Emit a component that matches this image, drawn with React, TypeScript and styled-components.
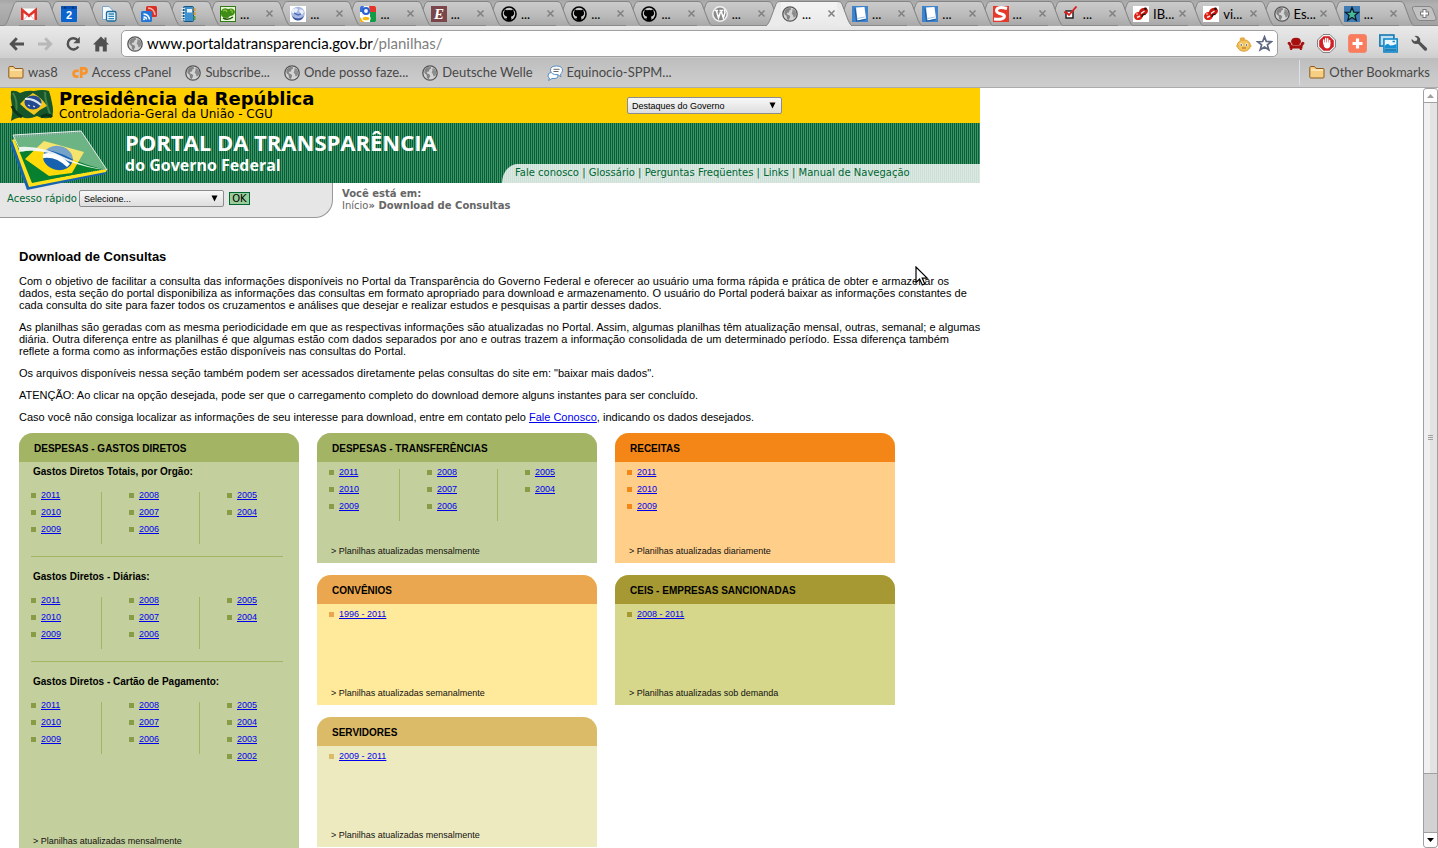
import React from "react";
import styled, { createGlobalStyle, css } from "styled-components";

const sans = `"Liberation Sans", Arial, sans-serif`;
const verdana = `"DejaVu Sans", Verdana, sans-serif`;
const ui = `Lato, "Open Sans", sans-serif`;
const display = `"Open Sans", "Noto Sans", sans-serif`;

const GlobalStyle = createGlobalStyle`
  * { box-sizing: border-box; }
  body { margin: 0; background: #fff; color: #000; font-family: ${sans}; }
  button { font: inherit; color: inherit; background: none; border: 0; padding: 0; }
  svg { display: block; flex: none; }
`;

const Window = styled.div`
  display: flex;
  flex-direction: column;
  height: 100vh;
  overflow: hidden;
`;

/* ---------- tab strip ---------- */

const TabStrip = styled.div`
  display: flex;
  height: 26px;
  padding-left: 5px;
  background: linear-gradient(#a6a6a6, #b2b2b2 20%, #a2a2a2);
  border-bottom: 1px solid #8a8a8a;
  font: 13px/24px ${ui};
`;

const TabBody = styled.div<{ $active?: boolean; $pinned?: boolean }>`
  display: flex;
  align-items: center;
  position: relative;
  min-width: 0;
  flex: ${(p) => (p.$pinned ? "0 0 26px" : "1 1 0")};
  padding-left: ${(p) => (p.$pinned ? 2 : 1)}px;
  margin-top: 1px;
  border-top: 1px solid #858585;
  background: linear-gradient(#cbcbcb, #bababa 60%, #a8a8a8);
  ${(p) =>
    p.$active &&
    css`
      background: linear-gradient(#f4f4f4, #e9e9e9);
      margin-bottom: -1px;
      padding-bottom: 1px;
    `}
`;

const TabLink = styled.button`
  display: flex;
  align-items: center;
  gap: 4px;
  flex: 1;
  min-width: 0;
  white-space: nowrap;
  color: #000;
`;

const CloseButton = styled.button`
  display: flex;
  width: 9px;
  margin-right: 1px;
`;

const NewTabButton = styled.button`
  display: flex;
  align-items: center;
  margin: 3px 1px 0 -2px;
`;

function TabEdge({ kind }: { kind: "first" | "between" | "last" | "intoActive" | "fromActive" }) {
  const id = `edge-${kind}`;
  const leftFill = kind === "fromActive" ? "#ebebeb" : `url(#${id})`;
  const rightFill = kind === "intoActive" ? "#ebebeb" : `url(#${id})`;
  const rightShape = "M14 1.5C11 1.5 10 2 9 4L3 20Q1 25 -1 26L14 26Z";
  const leftShape = "M0 1.5C3 1.5 4 2 5 4L11 20Q13 25 15 26L0 26Z";
  const rightLine = "M14 1.5C11 1.5 10 2 9 4L3 20Q1 25 -1 25.5";
  const leftLine = "M0 1.5C3 1.5 4 2 5 4L11 20Q13 25 15 25.5";
  const right = kind !== "last" && (
    <g>
      <path d={rightShape} fill={rightFill} />
      <path d={rightLine} fill="none" stroke="#858585" />
    </g>
  );
  const left = kind !== "first" && (
    <g>
      <path d={leftShape} fill={leftFill} />
      <path d={leftLine} fill="none" stroke="#808080" />
    </g>
  );
  return (
    <svg width="14" height="26" aria-hidden="true">
      <defs>
        <linearGradient id={id} x1="0" y1="0" x2="0" y2="1">
          <stop offset="0" stopColor="#cbcbcb" />
          <stop offset=".6" stopColor="#bababa" />
          <stop offset="1" stopColor="#a8a8a8" />
        </linearGradient>
      </defs>
      {kind === "intoActive" ? <>{left}{right}</> : <>{right}{left}</>}
    </svg>
  );
}

/* ---------- icons ---------- */

const Globe = () => (
  <svg width="16" height="16" viewBox="0 0 16 16">
    <circle cx="8" cy="8" r="7.2" fill="#d4d4d4" stroke="#555" strokeWidth="1.3" />
    <path d="M2.5 4.5L5 2.2L8.6 2L9.2 3.4L7.4 4.6L7 6.4L5 6.8L4.8 8.2L7.6 9.4L8.2 11L6.6 14.2L5 13L4.6 10L2.4 8Z" fill="#858585" />
    <path d="M10.5 3L13 4.2L14.4 7L13.6 10.6L11.6 11.4L10.8 9L9.6 7.4L10.4 5.4Z" fill="#8d8d8d" />
  </svg>
);
const Gmail = () => (
  <svg width="16" height="16" viewBox="0 0 16 16">
    <rect x="0" y="2.5" width="16" height="11.5" fill="#fff" />
    <path d="M1.3 14V4L8 9.8L14.7 4V14" fill="none" stroke="#e0342b" strokeWidth="2.6" />
    <path d="M3 13.5L6.4 9.6M13 13.5L9.6 9.6" stroke="#ddb6b3" />
  </svg>
);
const CalendarIcon = () => (
  <svg width="16" height="16" viewBox="0 0 16 16">
    <rect y="0" width="16" height="16" rx="1" fill="#0b63ce" />
    <path d="M0 1Q0 0 1 0H15Q16 0 16 1V3H0Z" fill="#0a4fae" />
    <circle cx="4" cy="1.800" r="1" fill="#05306e" /><circle cx="12" cy="1.800" r="1" fill="#05306e" />
    <text x="8" y="12.500" textAnchor="middle" fontFamily="Liberation Sans" fontWeight="bold" fontSize="11" fill="#fff">2</text>
  </svg>
);
const DocsIcon = () => (
  <svg width="16" height="16" viewBox="0 0 16 16">
    <path d="M1.500 .500H8L11.500 4V13.500H1.500Z" fill="#f4f9fd" stroke="#7ba4c8" />
    <rect x="5.500" y="5.500" width="9.500" height="9.500" rx="1.500" fill="#eaf5fb" stroke="#1d6a99" strokeWidth="1.300" />
    <path d="M7.500 8H13M7.500 10.300H13M7.500 12.600H13" stroke="#2f87b8" strokeWidth="1.300" />
  </svg>
);
const FeedIcon = () => (
  <svg width="16" height="16" viewBox="0 0 16 16">
    <rect x="5" y="0" width="11" height="11" rx="1.500" fill="#d93025" />
    <path d="M7 2Q13 2 14 9" stroke="#f6b0a8" strokeWidth="1.600" fill="none" />
    <rect x="0" y="5" width="11" height="11" rx="1.500" fill="#2377d8" />
    <path d="M2.500 8Q8 8.500 8.500 13.500M2.500 11Q5.500 11 5.500 13.500" stroke="#fff" strokeWidth="1.500" fill="none" />
    <circle cx="3" cy="13.300" r="1" fill="#fff" />
  </svg>
);
const NotebookIcon = () => (
  <svg width="16" height="16" viewBox="0 0 16 16">
    <rect x="2.500" y=".5" width="10" height="15" rx="1" fill="#3f92cf" stroke="#1c5479" />
    <rect x="6" y="3" width="5" height="3.500" fill="#e9f4fb" />
    <path d="M13.500 2V5M13.500 6V9" stroke="#d99b2e" strokeWidth="2" />
    <path d="M13.500 10V14" stroke="#4e9e48" strokeWidth="2" />
    <path d="M0 2.500H4M0 5.500H4M0 8.500H4M0 11.500H4M0 13.800H4" stroke="#dce6ec" />
  </svg>
);
const LeafIcon = () => (
  <svg width="16" height="16" viewBox="0 0 16 16">
    <rect x=".5" y=".5" width="15" height="15" fill="#eef4da" stroke="#2e7d17" />
    <path d="M1 5Q3 1 8 3Q14 1 15 6Q14 10 10 10L8 12Q1 12 1 8Z" fill="#3f8d17" />
    <path d="M3 5Q6 3 7 6M10 4Q13 4 12 7" stroke="#86c03a" fill="none" strokeWidth="1.300" />
    <path d="M3 12Q8 15 13 11" stroke="#1f5a0c" fill="none" strokeWidth="1.600" />
  </svg>
);
const BlueGlobeIcon = () => (
  <svg width="16" height="16" viewBox="0 0 16 16">
    <rect width="16" height="16" fill="#fff" />
    <circle cx="8" cy="7.500" r="6.800" fill="#a9b9e2" />
    <path d="M2 4Q5 1 8 3L7 6L4 8L2 7ZM9 4Q12 2 14 6L12 9L10 7Z" fill="#e9eefb" />
    <path d="M2 10Q8 15 14 10Q12 14.500 8 14.500Q4 14.500 2 10Z" fill="#38519e" />
    <path d="M4 7L8 9L11 8" stroke="#5470b9" fill="none" strokeWidth="1.500" />
  </svg>
);
const GoogleIcon = () => (
  <svg width="16" height="16" viewBox="0 0 16 16">
    <rect width="16" height="16" rx="1.500" fill="#fff" />
    <path d="M9 0H14.500Q16 0 16 1.500V6H10Z" fill="#e5352b" />
    <path d="M10 6H16V14.500Q16 16 14.500 16H10Z" fill="#139b48" />
    <path d="M0 6V1.500Q0 0 1.500 0H4L2 6Z" fill="#3870d8" />
    <path d="M0 11V14.500Q0 16 1.500 16H4Z" fill="#f6b60c" />
    <circle cx="6" cy="5" r="3" fill="#fff" stroke="#2b62cf" strokeWidth="2.200" />
    <ellipse cx="6" cy="12.500" rx="4" ry="2.500" fill="#f9bb12" stroke="#fff" strokeWidth="1.300" />
  </svg>
);
const EIcon = () => (
  <svg width="16" height="16" viewBox="0 0 16 16">
    <rect width="16" height="16" fill="#7a4649" />
    <text x="8" y="13" textAnchor="middle" fontFamily="Liberation Serif" fontStyle="italic" fontWeight="bold" fontSize="15" fill="#fff">E</text>
  </svg>
);
const GithubIcon = () => (
  <svg width="16" height="16" viewBox="0 0 16 16">
    <circle cx="8" cy="8" r="7" fill="#c9c9c9" stroke="#000" strokeWidth="1.600" />
    <path d="M3.600 3.200L5.800 4.200Q8 3.600 10.200 4.200L12.400 3.200L12.600 5.600Q13.600 7 12.800 8.800Q12 10.400 9.800 10.700L10.400 12V15.300H5.600V13.400L3.800 12.500L5.800 12.200L6.200 10.700Q4 10.400 3.200 8.800Q2.400 7 3.400 5.600Z" fill="#000" />
  </svg>
);
const WordpressIcon = () => (
  <svg width="16" height="16" viewBox="0 0 16 16">
    <circle cx="8" cy="8" r="7.200" fill="#8a8a8a" stroke="#f1f1f1" strokeWidth="1.500" />
    <path d="M3 4.500H6M7.500 4.500H11M4.300 4.500L6.500 12L8.500 6M9 4.500L11.300 12L13 6.500Q13 4.500 11.800 3.500" fill="none" stroke="#fff" strokeWidth="1.500" />
  </svg>
);
const BlueBookIcon = () => (
  <svg width="16" height="16" viewBox="0 0 16 16">
    <rect width="16" height="16" fill="#3f84cb" />
    <path d="M4 1.500L12.500 1L14 12.500L5.500 14.500Z" fill="#fff" />
    <path d="M5.500 12.500L12.800 11" stroke="#a5c3df" /><path d="M3 2.500L4.500 15.200L13.500 13.600" stroke="#1c5a9c" fill="none" />
  </svg>
);
const SIcon = () => (
  <svg width="16" height="16" viewBox="0 0 16 16">
    <rect width="16" height="16" fill="#e33a2c" />
    <path d="M14 2.500Q4 0 3.500 4.500Q3.500 7 8.500 8Q12.500 9 11 11.500Q9 14 1 13" stroke="#fff" strokeWidth="3" fill="none" />
  </svg>
);
const CheckIcon = () => (
  <svg width="16" height="16" viewBox="0 0 16 16">
    <rect x="3" y="5" width="7" height="7" fill="#fff" stroke="#222" strokeWidth="1.500" />
    <path d="M1 6.500L3 6L6 9L13.500 .500" stroke="#e01b1b" strokeWidth="1.800" fill="none" />
  </svg>
);
const KnotIcon = () => (
  <svg width="16" height="16" viewBox="0 0 16 16">
    <rect width="16" height="16" fill="#fff" />
    <ellipse cx="5.500" cy="10" rx="4.500" ry="4" fill="#dd2014" transform="rotate(-25 5.500 10)" />
    <ellipse cx="10.500" cy="5.500" rx="4.600" ry="3.600" fill="#c4170f" transform="rotate(-25 10.500 5.500)" />
    <path d="M8 7.500L11.500 5" stroke="#fff" strokeWidth="1.300" />
    <path d="M4 11.500L7 10" stroke="#fbe3e0" strokeWidth="1.500" />
    <path d="M9 11Q9 8 12.500 8.500" stroke="#2c0a08" fill="none" strokeWidth="1.300" />
    <circle cx="4" cy="8" r="1" fill="#ff9489" />
    <circle cx="12.500" cy="2.800" r="1.300" fill="#2c0a08" />
  </svg>
);
const StarTabIcon = () => (
  <svg width="16" height="16" viewBox="0 0 16 16">
    <rect width="16" height="16" fill="#3f7cb4" />
    <path d="M8 1.500L9.800 6.100L14.700 6.300L10.900 9.400L12.200 14.200L8 11.500L3.800 14.200L5.100 9.400L1.300 6.300L6.200 6.100Z" fill="#46b897" stroke="#0b1d2c" strokeWidth="1.300" />
  </svg>
);
const CloseIcon = () => (
  <svg width="9" height="9" viewBox="0 0 9 9">
    <path d="M1.500 1.500L7.500 7.500M7.500 1.500L1.500 7.500" stroke="#808080" strokeWidth="1.500" />
  </svg>
);
const NewTabIcon = () => (
  <svg width="26" height="16" viewBox="0 0 26 16">
    <path d="M1.500 3Q.5.500 3.500.500H18Q20.500.500 21.500 3L25 12Q25.500 14.500 23 14.500H9Q6.500 14.500 5.500 12Z" fill="#c2c2c2" stroke="#868686" />
    <path d="M13.500 3V12M9 7.500H18" stroke="#777" strokeWidth="4" />
    <path d="M13.500 4V11M10 7.500H17" stroke="#fff" strokeWidth="2" />
  </svg>
);
const ArrowIcon = ({ flip, color }: { flip?: boolean; color: string }) => (
  <svg width="16" height="14" viewBox="0 0 16 14">
    <g transform={flip ? "matrix(-1 0 0 1 16 0)" : undefined} fill="none" stroke={color} strokeWidth="2.800">
      <path d="M7.800 1.200L2.200 7L7.800 12.800M2.500 7H15" />
    </g>
  </svg>
);
const ReloadIcon = () => (
  <svg width="16" height="16" viewBox="0 0 16 16">
    <path d="M12.700 4.200A5.600 5.600 0 1 0 13.300 10.500" fill="none" stroke="#505050" strokeWidth="2.500" />
    <path d="M14.800.800V7.200H8.400Z" fill="#505050" />
  </svg>
);
const HomeIcon = () => (
  <svg width="16" height="16" viewBox="0 0 16 16">
    <path d="M8 .500L11.500 4V1.500H13.500V6L16 8.600H13.800V15.500H9.800V10.500H6.300V15.500H2.300V8.600H0Z" fill="#505050" />
  </svg>
);
const FaceIcon = () => (
  <svg width="16" height="16" viewBox="0 0 16 16">
    <ellipse cx="7.800" cy="9.500" rx="6.500" ry="5.700" fill="#f3c35c" stroke="#d79c33" />
    <path d="M4 4Q3 1 6 1.500Q8 .500 9 2.500L8 5Z" fill="#e6ac43" />
    <circle cx="1.500" cy="10" r="1.300" fill="#e8b14a" /><circle cx="14.300" cy="10" r="1.300" fill="#e8b14a" />
    <circle cx="5.200" cy="8.800" r="1.500" fill="#fff" /><circle cx="10.500" cy="8.800" r="1.500" fill="#fff" />
    <circle cx="5.200" cy="9" r=".800" fill="#333" /><circle cx="10.500" cy="9" r=".800" fill="#333" />
    <path d="M6 12H10" stroke="#a86c18" />
  </svg>
);
const StarIcon = () => (
  <svg width="17" height="17" viewBox="0 0 17 17">
    <path d="M8.500 1.800L10.300 6.500L15.400 6.700L11.400 9.900L12.800 14.800L8.500 12L4.200 14.800L5.600 9.900L1.600 6.700L6.700 6.500Z" fill="#fff" stroke="#5e6880" strokeWidth="1.700" />
  </svg>
);
const SofaIcon = () => (
  <svg width="18" height="14" viewBox="0 0 18 14">
    <path d="M4 5Q4 .700 9 .700Q14 .700 14 5L12.500 8H5.500Z" fill="#a50f0f" />
    <path d="M.500 6.500Q.500 4.800 2.400 4.800Q4.200 5 4.500 8H13.500Q13.800 5 15.600 4.800Q17.500 4.800 17.500 6.500L15.500 9V11.500H14.500L15 13H13L12.500 11.500H5.500L5 13H3L3.500 11.500H2.500V9Z" fill="#a50f0f" />
    <path d="M4.500 5.500L5.500 8.500H12.500L13.500 5.500" fill="none" stroke="#d07a7a" strokeWidth=".600" />
  </svg>
);
const StopHandIcon = () => (
  <svg width="19" height="19" viewBox="0 0 19 19">
    <path d="M6 .600H13L18.400 6V13L13 18.400H6L.600 13V6Z" fill="#fff" stroke="#777" />
    <path d="M6.500 2.200H12.500L16.800 6.500V12.500L12.500 16.800H6.500L2.200 12.500V6.500Z" fill="#cf1f24" />
    <path d="M6.700 9V6M8.700 9V4.500M10.700 9V4.800M12.600 9.500V6.500" stroke="#fff" strokeWidth="1.500" strokeLinecap="round" />
    <path d="M6 8.500H13.300V12Q12.500 14.500 10 14.500Q8 14.500 7 12.500Z" fill="#fff" />
  </svg>
);
const PlusBoxIcon = () => (
  <svg width="19" height="19" viewBox="0 0 19 19">
    <rect x=".500" y=".500" width="18" height="18" rx="2.500" fill="#fb7b5d" stroke="#ee8a72" />
    <path d="M9.500 4.500V14.500M4.500 9.500H14.500" stroke="#fff" strokeWidth="3.200" />
  </svg>
);
const PicturesIcon = () => (
  <svg width="19" height="19" viewBox="0 0 19 19">
    <rect x=".900" y="1" width="14" height="11" fill="#bfe0f2" stroke="#1677ae" strokeWidth="1.600" />
    <rect x="4.900" y="5" width="13.300" height="13" fill="#eaf7ff" stroke="#178ac9" strokeWidth="1.600" />
    <path d="M5.500 12Q8.500 8.500 11 11.500Q14 11.500 17.500 10V14.500H5.500Z" fill="#158fd3" />
    <path d="M5.500 14.500H17.500V17.500H5.500Z" fill="#2083bc" />
    <path d="M13.500 7.500H16" stroke="#178ac9" strokeWidth="1.500" />
  </svg>
);
const WrenchIcon = () => (
  <svg width="17" height="17" viewBox="0 0 17 17">
    <path d="M3.500 1Q7.500 0 9 3.500Q9.500 5 9 6.500L15.800 13Q16.600 14.200 15.700 15.200Q14.600 16.200 13.400 15.400L7 8.700Q2.500 10 .700 6Q.500 5 .700 4L3.400 6.300L5.900 5.600L6.300 3.200Z" fill="#525252" />
  </svg>
);
const FolderIcon = () => (
  <svg width="16" height="16" viewBox="0 0 16 16">
    <path d="M.800 12V2.500Q.800 1.500 1.800 1.500H5.500L7 3.500H14Q15 3.500 15 4.500V12Q15 13 14 13H1.800Q.800 13 .800 12Z" fill="#f6cf83" stroke="#8c5a1e" />
    <path d="M2 5H14" stroke="#fdebc0" strokeWidth="1.500" />
  </svg>
);
const CPanelIcon = () => (
  <svg width="16" height="16" viewBox="0 0 16 16">
    <path d="M6.800 5.800H4.800Q1.500 5.800 1.500 8.700Q1.500 11.600 4.800 11.600H6.400" fill="none" stroke="#f8932b" strokeWidth="2.600" />
    <path d="M9.200 13V3.300H12Q14.600 3.300 14.600 5.800Q14.600 8.500 12 8.500H9.600" fill="none" stroke="#f8932b" strokeWidth="2.700" />
  </svg>
);
const ChatIcon = () => (
  <svg width="16" height="16" viewBox="0 0 16 16">
    <path d="M1 11Q1 7.500 4 7.500H8Q11 8 11 11Q11 13.500 8 13.500H5L1.500 15.500L2.500 13Q1 12.500 1 11Z" fill="#fff" stroke="#5b8fc4" />
    <path d="M3.500 5Q3.500 1 9.500 1Q15.500 1 15.500 5.200Q15.500 8 13.500 9L14 12L11 9.700Q3.500 10 3.500 5Z" fill="#fff" stroke="#5b8fc4" />
    <path d="M6.500 4.300H12.500M6.500 6.500H11.500" stroke="#666" />
  </svg>
);
const FlagIcon = () => (
  <svg width="44" height="33" viewBox="0 0 44 33">
    <path d="M1 2Q6 1 10 4Q16 1 24 2Q33 0 39 2Q41 8 42 14Q44 22 42 28Q34 31 27 27Q18 31 12 28Q5 29 1 32Q3 24 2 17Q0 9 1 2Z" fill="#17552a" />
    <path d="M3 4Q8 12 6 24M35 3Q35 12 40 25" stroke="#3f8246" strokeWidth="2" fill="none" />
    <path d="M10 15Q16 8 23 4Q32 9 37 17Q30 20 24 26Q16 21 10 15Z" fill="#f4c81c" />
    <ellipse cx="23" cy="13.500" rx="8.500" ry="7" fill="#234a8e" />
    <path d="M15 10Q23 9 31 16" stroke="#dce9f2" strokeWidth="2" fill="none" />
    <path d="M18 16L20 17M23 17L25 18" stroke="#fff" />
    <path d="M2 17Q5 24 12 28M31 28Q38 24 42 28" stroke="#0c3519" strokeWidth="3" fill="none" />
  </svg>
);
const PortalLogo = () => (
  <svg width="98" height="62" viewBox="0 0 98 62">
    <path d="M0 13L17 60L95 44L97 41L22 56L4 9Z" fill="#1763ae" />
    <path d="M2 10L19 57L96 42L97 39L22 52L6 8Z" fill="#ffe11a" />
    <path d="M4 8L22 53L97 38L71 3Z" fill="#07812f" />
    <path d="M15 29L34 11L74 22L62 43L39 46Z" fill="#ffda08" />
    <ellipse cx="48" cy="28" rx="15" ry="12" fill="#1762ae" transform="rotate(12 48 28)" />
    <path d="M33 24Q46 20 60 34L57 37Q46 26 33 28Z" fill="#fff" />
    <path d="M3 5L71 1L97 40Q78 36 62 29Q35 14 12 22Z" fill="#e8f1ec" opacity=".45" />
    <path d="M9 17Q31 15 56 28Q76 37 97 40Q76 38 58 31Q33 17 9 22Z" fill="#f7fbf9" opacity=".9" />
    <path d="M3 5L71 1L97 40M3 5L10 20" fill="none" stroke="#e6efea" />
  </svg>
);
const CursorIcon = () => (
  <svg width="14" height="21" viewBox="0 0 14 21">
    <path d="M1 1V16.500L4.600 13L7.300 19L9.800 18L7.200 12.200H12.200Z" fill="#fff" stroke="#000" strokeWidth="1.200" />
  </svg>
);

/* ---------- toolbar ---------- */

const Toolbar = styled.div`
  display: flex;
  align-items: center;
  height: 32px;
  padding: 3px 3px 0;
  background: linear-gradient(#e9e9e9, #d9d9d9 70%, #cecece);
`;

const ToolButton = styled.button<{ $wide?: boolean }>`
  display: flex;
  justify-content: center;
  align-items: center;
  flex: none;
  width: ${(p) => (p.$wide ? 31 : 28)}px;
  height: 26px;
`;

const Omnibox = styled.div`
  display: flex;
  align-items: center;
  flex: 1;
  min-width: 0;
  height: 27px;
  margin: 0 2px 0 6px;
  padding: 0 4px 0 5px;
  gap: 4px;
  background: #fff;
  border: 1px solid #a0a0a0;
  border-radius: 5px;
`;

const Address = styled.div`
  flex: 1;
  font: 15px/22px ${ui};
  padding-bottom: 2px;
  color: #808080;
  white-space: nowrap;
  b { font-weight: 400; color: #000; }
`;

const BookmarkBar = styled.nav`
  display: flex;
  align-items: center;
  height: 30px;
  padding: 0 8px;
  gap: 14px;
  background: linear-gradient(#bdbdbd, #c8c8c8 60%, #cdcdcd);
  border-bottom: 1px solid #ababab;
`;

const Bookmark = styled.a<{ $last?: boolean }>`
  display: flex;
  align-items: center;
  gap: 4px;
  font: 13px/27px ${ui};
  color: #484848;
  text-decoration: none;
  white-space: nowrap;
  ${(p) =>
    p.$last &&
    css`
      margin-left: auto;
      padding-left: 9px;
      border-left: 1px solid #dcdfec;
      line-height: 25px;
    `}
`;

/* ---------- page frame ---------- */

const Viewport = styled.div`
  display: flex;
  flex: 1;
  min-height: 0;
`;

const Page = styled.main`
  position: relative;
  flex: 1;
  min-width: 0;
  overflow: hidden;
`;

const Scrollbar = styled.div`
  display: flex;
  flex-direction: column;
  flex: none;
  width: 15px;
  border: 1px solid #a0a0a0;
  border-top: 0;
  border-radius: 4px;
  background: #d2d2d2;
`;

const ScrollButton = styled.button`
  display: flex;
  align-items: center;
  justify-content: center;
  height: 15px;
  border: 1px solid #a0a0a0;
  border-width: 1px 0;
  border-radius: 3px 3px 0 0;
  background: #fff;
  &:last-child { border-bottom: 0; border-radius: 0 0 3px 3px; }
`;

const ScrollThumb = styled.div`
  display: flex;
  align-items: center;
  justify-content: center;
  flex: 672;
  background: linear-gradient(90deg, #f0f0f0 50%, #e3e3e3 50%);
  border-bottom: 1px solid #a0a0a0;
`;

const ScrollTrack = styled.div`
  flex: 58;
`;

const Site = styled.div`
  width: 100%;
  max-width: 980px;
`;

const GovBar = styled.div`
  display: flex;
  align-items: center;
  justify-content: space-between;
  height: 35px;
  padding: 0 198px 0 10px;
  background: #ffcf00;
`;

const GovBrand = styled.div`
  display: flex;
  gap: 5px;
`;

const GovName = styled.div`
  display: flex;
  flex-direction: column;
  font: 12px/12px ${verdana};
  white-space: nowrap;
  strong { font-size: 18px; line-height: 19px; }
`;

const Banner = styled.header`
  display: flex;
  justify-content: space-between;
  height: 60px;
  padding-left: 10px;
  background: repeating-linear-gradient(90deg, #006432 0 1px, #458f6d 1px 2px);
`;

const Brand = styled.div`
  display: flex;
  gap: 17px;
  position: relative;
  padding-top: 7px;
  color: #fff;
`;

const BrandText = styled.div`
  font: 700 16px/23px ${display};
  white-space: nowrap;
  h1 { margin: 0; font: 700 22px/24px ${display}; }
`;

const TopLinks = styled.nav`
  align-self: flex-end;
  width: 478px;
  height: 19px;
  padding-left: 13px;
  border-top-left-radius: 16px 19px;
  background: repeating-linear-gradient(90deg, #cde0d7 0 1px, #dbe9e2 1px 2px);
  font: 10px/17px ${verdana};
  color: #006633;
  white-space: nowrap;
  a { color: inherit; text-decoration: none; }
`;

const SubHeader = styled.div`
  display: flex;
  align-items: flex-start;
`;

const QuickAccess = styled.form`
  display: flex;
  align-items: center;
  gap: 2px;
  width: 333px;
  height: 35px;
  padding: 0 0 3px 7px;
  background: #e6e6e6;
  border: 1px solid #999;
  border-width: 0 1px 1px 0;
  border-bottom-right-radius: 18px;
  font: 10px/12px ${verdana};
  color: #006633;
`;

const SelectBox = styled.span<{ $wide?: boolean }>`
  display: inline-grid;
  align-items: center;
  width: ${(p) => (p.$wide ? 155 : 145)}px;
  > * { grid-area: 1 / 1; }
  > svg { justify-self: end; margin-right: 6px; pointer-events: none; }
`;

const Select = styled.select`
  appearance: none;
  width: 100%;
  height: 17px;
  margin: 0;
  padding: 0 4px;
  border: 1px solid #8c8c8c;
  border-radius: 2px;
  background: linear-gradient(#f8f8f8, #dedede);
  color: #000;
  font: 9px/14px ${sans};
`;

const OkButton = styled.button`
  width: 21px;
  height: 13px;
  margin-left: 3px;
  border: 1px solid #006633;
  background: #99cc99;
  color: #000;
  font: 10px/10px ${verdana};
`;

const Breadcrumb = styled.div`
  padding: 5px 0 0 9px;
  font: 10px/12px ${verdana};
  color: #666;
  a { color: inherit; text-decoration: none; }
`;

const Content = styled.section`
  padding: 31px 31px 0 19px;
  h2 { margin: 0 0 10px; font: bold 13px/16px ${sans}; }
  p { margin: 0 0 10px; font: 11px/12px ${sans}; text-align: justify; }
  a { color: #0000ee; }
`;

const FullLine = styled.span`
  display: block;
  white-space: nowrap;
  text-align-last: justify;
`;

/* ---------- cards ---------- */

const CardGrid = styled.div`
  display: grid;
  grid-template-columns: repeat(3, 280px);
  grid-auto-rows: 130px;
  gap: 12px 18px;
`;

interface Theme {
  head: string;
  body: string;
  bullet: string;
}

const CardBox = styled.article<{ $theme: Theme; $tall?: boolean }>`
  display: flex;
  flex-direction: column;
  overflow: hidden;
  border-radius: 14px 14px 0 0;
  background: ${(p) => p.$theme.body};
  ${(p) =>
    p.$tall &&
    css`
      grid-row: span 3;
      margin-bottom: -6px;
    `}
  h3 {
    margin: 0 0 1px;
    padding: 2px 15px 0;
    background: ${(p) => p.$theme.head};
    font: bold 10px/27px ${sans};
  }
  li::before {
    content: "";
    flex: none;
    width: 5px;
    height: 5px;
    background: ${(p) => p.$theme.bullet};
  }
`;

const Section = styled.div`
  margin: 0 16px 11px 12px;
  padding-bottom: 12px;
  border-bottom: 1px solid #a3b565;
  &:last-of-type { border: 0; margin-bottom: 0; padding: 0; }
  h4 { margin: 0 0 6px; padding-left: 2px; font: bold 10px/17px ${sans}; }
`;

const Columns = styled.div`
  display: flex;
  align-items: flex-start;
`;

const Years = styled.ul`
  flex: none;
  width: 70px;
  margin: 0;
  padding: 1px 0 0;
  list-style: none;
  white-space: nowrap;
  font: 9px/17px ${sans};
  &:last-child { width: 56px; }
  li { display: flex; align-items: center; gap: 5px; }
`;

const Divider = styled.div`
  flex: none;
  width: 1px;
  height: 52px;
  margin: 6px 27px 0 0;
  background: #a3b565;
`;

const CardNote = styled.footer`
  margin: auto 0 6px;
  padding-left: 14px;
  font: 9px/12px ${sans};
  color: #111;
`;

const CursorMark = styled.div`
  position: absolute;
  left: 915px;
  top: 178px;
  pointer-events: none;
`;

const green: Theme = { head: "#a3b565", body: "#c3cf9c", bullet: "#889c47" };
const orange: Theme = { head: "#f38616", body: "#ffcf8a", bullet: "#f38616" };
const amber: Theme = { head: "#eaa74f", body: "#ffe99b", bullet: "#eaa74f" };
const olive: Theme = { head: "#a69934", body: "#d6d78a", bullet: "#a69934" };
const sand: Theme = { head: "#dcbb68", body: "#eeeabf", bullet: "#dcbb68" };

const threeYears = [["2011", "2010", "2009"], ["2008", "2007", "2006"], ["2005", "2004"]];

function YearColumns({ columns }: { columns: string[][] }) {
  return (
    <Columns>
      {columns.map((years, i) => (
        <React.Fragment key={i}>
          <Years>
            {years.map((y) => (
              <li key={y}><a href="#planilha">{y}</a></li>
            ))}
          </Years>
          {i < columns.length - 1 && <Divider />}
        </React.Fragment>
      ))}
    </Columns>
  );
}

function Card({ title, theme, columns, note }: { title: string; theme: Theme; columns: string[][]; note: string }) {
  return (
    <CardBox $theme={theme}>
      <h3>{title}</h3>
      <Section><YearColumns columns={columns} /></Section>
      <CardNote>&gt; Planilhas atualizadas {note}</CardNote>
    </CardBox>
  );
}

const DropArrow = () => (
  <svg width="7" height="7" viewBox="0 0 7 7"><path d="M.500 .500H6.500L3.500 6.500Z" fill="#000" /></svg>
);

const pinned = [
  { name: "Gmail", icon: <Gmail /> },
  { name: "Agenda", icon: <CalendarIcon /> },
  { name: "Docs", icon: <DocsIcon /> },
  { name: "Reader", icon: <FeedIcon /> },
  { name: "Contatos", icon: <NotebookIcon /> },
];

const tabs: { icon: React.ReactNode; text?: string; active?: boolean }[] = [
  { icon: <LeafIcon /> },
  { icon: <BlueGlobeIcon /> },
  { icon: <GoogleIcon /> },
  { icon: <EIcon /> },
  { icon: <GithubIcon /> },
  { icon: <GithubIcon /> },
  { icon: <GithubIcon /> },
  { icon: <WordpressIcon /> },
  { icon: <Globe />, active: true },
  { icon: <BlueBookIcon /> },
  { icon: <BlueBookIcon /> },
  { icon: <SIcon /> },
  { icon: <CheckIcon /> },
  { icon: <KnotIcon />, text: "IB" },
  { icon: <KnotIcon />, text: "vi" },
  { icon: <Globe />, text: "Es" },
  { icon: <StarTabIcon /> },
];

function Tabs() {
  return (
    <TabStrip>
      <TabEdge kind="first" />
      {pinned.map((t) => (
        <React.Fragment key={t.name}>
          <TabBody $pinned><TabLink aria-label={t.name}>{t.icon}</TabLink></TabBody>
          <TabEdge kind="between" />
        </React.Fragment>
      ))}
      {tabs.map((t, i) => {
        const kind = t.active ? "fromActive" : tabs[i + 1]?.active ? "intoActive" : i === tabs.length - 1 ? "last" : "between";
        return (
          <React.Fragment key={i}>
            <TabBody $active={t.active}>
              <TabLink>{t.icon}<span>{t.text}...</span></TabLink>
              <CloseButton aria-label="Close tab"><CloseIcon /></CloseButton>
            </TabBody>
            <TabEdge kind={kind} />
          </React.Fragment>
        );
      })}
      <NewTabButton aria-label="New tab"><NewTabIcon /></NewTabButton>
    </TabStrip>
  );
}

export default function App() {
  return (
    <Window>
      <GlobalStyle />
      <Tabs />
      <Toolbar>
        <ToolButton aria-label="Back"><ArrowIcon color="#505050" /></ToolButton>
        <ToolButton aria-label="Forward"><ArrowIcon flip color="#b8b8b8" /></ToolButton>
        <ToolButton aria-label="Reload"><ReloadIcon /></ToolButton>
        <ToolButton aria-label="Home"><HomeIcon /></ToolButton>
        <Omnibox>
          <Globe />
          <Address><b>www.portaldatransparencia.gov.br</b>/planilhas/</Address>
          <FaceIcon />
          <StarIcon />
        </Omnibox>
        <ToolButton $wide aria-label="Sofa"><SofaIcon /></ToolButton>
        <ToolButton $wide aria-label="Block ads"><StopHandIcon /></ToolButton>
        <ToolButton $wide aria-label="Add"><PlusBoxIcon /></ToolButton>
        <ToolButton $wide aria-label="Pictures"><PicturesIcon /></ToolButton>
        <ToolButton $wide aria-label="Settings"><WrenchIcon /></ToolButton>
      </Toolbar>
      <BookmarkBar>
        <Bookmark href="#was8"><FolderIcon />was8</Bookmark>
        <Bookmark href="#cpanel"><CPanelIcon />Access cPanel</Bookmark>
        <Bookmark href="#subscribe"><Globe />Subscribe...</Bookmark>
        <Bookmark href="#onde"><Globe />Onde posso faze...</Bookmark>
        <Bookmark href="#dw"><Globe />Deutsche Welle</Bookmark>
        <Bookmark href="#equinocio"><ChatIcon />Equinocio-SPPM...</Bookmark>
        <Bookmark href="#other" $last><FolderIcon />Other Bookmarks</Bookmark>
      </BookmarkBar>
      <Viewport>
        <Page>
          <Site>
            <GovBar>
              <GovBrand>
                <FlagIcon />
                <GovName>
                  <strong>Presidência da República</strong>
                  <span>Controladoria-Geral da União - CGU</span>
                </GovName>
              </GovBrand>
              <SelectBox $wide>
                <Select aria-label="Destaques do Governo"><option>Destaques do Governo</option></Select>
                <DropArrow />
              </SelectBox>
            </GovBar>
            <Banner>
              <Brand>
                <PortalLogo />
                <BrandText>
                  <h1>PORTAL DA TRANSPARÊNCIA</h1>
                  do Governo Federal
                </BrandText>
              </Brand>
              <TopLinks>
                <a href="#fale">Fale conosco</a> | <a href="#glossario">Glossário</a> | <a href="#perguntas">Perguntas Freqüentes</a> | <a href="#links">Links</a> | <a href="#manual">Manual de Navegação</a>
              </TopLinks>
            </Banner>
            <SubHeader>
              <QuickAccess onSubmit={(e) => e.preventDefault()}>
                <label htmlFor="acesso">Acesso rápido</label>
                <SelectBox>
                  <Select id="acesso"><option>Selecione...</option></Select>
                  <DropArrow />
                </SelectBox>
                <OkButton type="submit">OK</OkButton>
              </QuickAccess>
              <Breadcrumb>
                <b>Você está em:</b><br />
                <a href="#inicio">Início</a><b>» Download de Consultas</b>
              </Breadcrumb>
            </SubHeader>
            <Content>
              <h2>Download de Consultas</h2>
              <p>
                <FullLine>Com o objetivo de facilitar a consulta das informações disponíveis no Portal da Transparência do Governo Federal e oferecer ao usuário uma forma rápida e prática de obter e armazenar os</FullLine>
                <FullLine>dados, esta seção do portal disponibiliza as informações das consultas em formato apropriado para download e armazenamento. O usuário do Portal poderá baixar as informações constantes de</FullLine>
                cada consulta do site para fazer todos os cruzamentos e análises que desejar e realizar estudos e pesquisas a partir desses dados.
              </p>
              <p>
                <FullLine>As planilhas são geradas com as mesma periodicidade em que as respectivas informações são atualizadas no Portal. Assim, algumas planilhas têm atualização mensal, outras, semanal; e algumas</FullLine>
                <FullLine>diária. Outra diferença entre as planilhas é que algumas estão com dados separados por ano e outras trazem a informação consolidada de um determinado período. Essa diferença também</FullLine>
                reflete a forma como as informações estão disponíveis nas consultas do Portal.
              </p>
              <p>Os arquivos disponíveis nessa seção também podem ser acessados diretamente pelas consultas do site em: "baixar mais dados".</p>
              <p>ATENÇÃO: Ao clicar na opção desejada, pode ser que o carregamento completo do download demore alguns instantes para ser concluído.</p>
              <p>Caso você não consiga localizar as informações de seu interesse para download, entre em contato pelo <a href="#fale">Fale Conosco</a>, indicando os dados desejados.</p>
              <CardGrid>
                <CardBox $theme={green} $tall>
                  <h3>DESPESAS - GASTOS DIRETOS</h3>
                  <Section><h4>Gastos Diretos Totais, por Orgão:</h4><YearColumns columns={threeYears} /></Section>
                  <Section><h4>Gastos Diretos - Diárias:</h4><YearColumns columns={threeYears} /></Section>
                  <Section>
                    <h4>Gastos Diretos - Cartão de Pagamento:</h4>
                    <YearColumns columns={[threeYears[0], threeYears[1], ["2005", "2004", "2003", "2002"]]} />
                  </Section>
                  <CardNote>&gt; Planilhas atualizadas mensalmente</CardNote>
                </CardBox>
                <Card title="DESPESAS - TRANSFERÊNCIAS" theme={green} columns={threeYears} note="mensalmente" />
                <Card title="RECEITAS" theme={orange} columns={[threeYears[0]]} note="diariamente" />
                <Card title="CONVÊNIOS" theme={amber} columns={[["1996 - 2011"]]} note="semanalmente" />
                <Card title="CEIS - EMPRESAS SANCIONADAS" theme={olive} columns={[["2008 - 2011"]]} note="sob demanda" />
                <Card title="SERVIDORES" theme={sand} columns={[["2009 - 2011"]]} note="mensalmente" />
              </CardGrid>
            </Content>
          </Site>
          <CursorMark><CursorIcon /></CursorMark>
        </Page>
        <Scrollbar>
          <ScrollButton aria-label="Scroll up">
            <svg width="7" height="4"><path d="M0 4L3.500 0L7 4Z" fill="#a0a0a0" /></svg>
          </ScrollButton>
          <ScrollThumb>
            <svg width="5" height="6"><path d="M0 .500H5M0 2.500H5M0 4.500H5" stroke="#a0a0a0" /></svg>
          </ScrollThumb>
          <ScrollTrack />
          <ScrollButton aria-label="Scroll down">
            <svg width="7" height="4"><path d="M0 0L3.500 4L7 0Z" fill="#000" /></svg>
          </ScrollButton>
        </Scrollbar>
      </Viewport>
    </Window>
  );
}
